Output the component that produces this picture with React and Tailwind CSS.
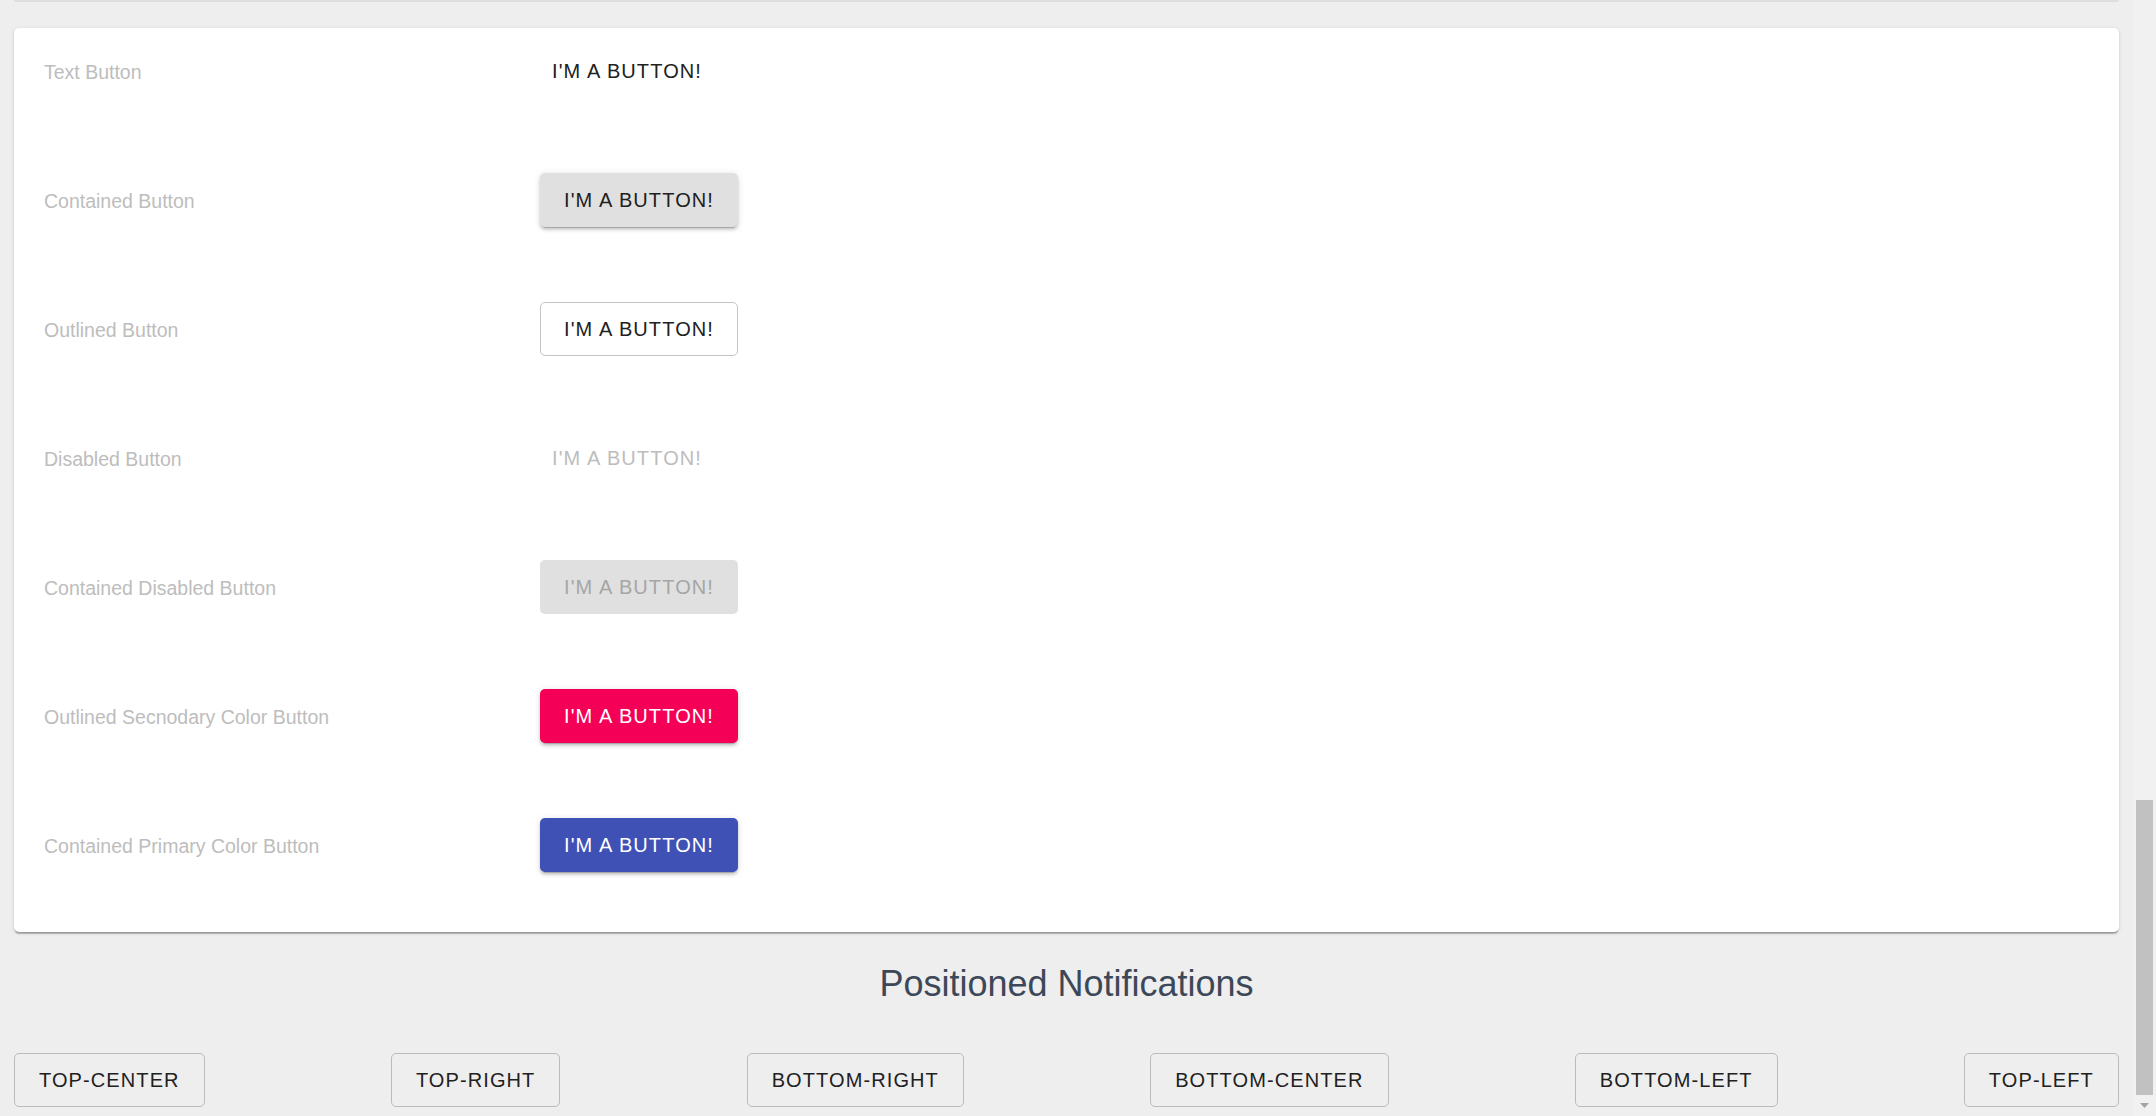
import React from 'react';

// Button demo rows shown inside the card
const rows = [
  { label: 'Text Button', variant: 'text' },
  { label: 'Contained Button', variant: 'contained' },
  { label: 'Outlined Button', variant: 'outlined' },
  { label: 'Disabled Button', variant: 'disabled' },
  { label: 'Contained Disabled Button', variant: 'containedDisabled' },
  { label: 'Outlined Secnodary Color Button', variant: 'secondary' },
  { label: 'Contained Primary Color Button', variant: 'primary' },
];

const positions = ['TOP-CENTER', 'TOP-RIGHT', 'BOTTOM-RIGHT', 'BOTTOM-CENTER', 'BOTTOM-LEFT', 'TOP-LEFT'];

const raised =
  'shadow-[0_4px_1px_-3px_rgba(0,0,0,0.2),0_3px_3px_0_rgba(0,0,0,0.14),0_1px_7px_0_rgba(0,0,0,0.12)]';

const variantClass = {
  text: 'px-[12px] text-[#212121]',
  contained: `w-[198px] justify-center bg-[#e0e0e0] text-[#212121] ${raised}`,
  outlined: 'w-[198px] justify-center bg-white border border-[#c4c4c4] text-[#212121]',
  disabled: 'px-[12px] text-[#bdbdbd] cursor-default',
  containedDisabled: 'w-[198px] justify-center bg-[#e0e0e0] text-[#a6a6a6] cursor-default',
  secondary: `w-[198px] justify-center bg-[#f50057] text-white ${raised}`,
  primary: `w-[198px] justify-center bg-[#3f51b5] text-white ${raised}`,
};

const DemoButton = ({ variant }) => (
  <button
    type="button"
    className={`flex items-center h-[54px] rounded-[5px] text-[20px] tracking-[1.1px] leading-none uppercase ${variantClass[variant]}`}
  >
    I'M A BUTTON!
  </button>
);

const App = () => {
  return (
    <div
      className="flex h-[1116px] w-full overflow-hidden bg-[#eeeeee]"
      style={{ fontFamily: '"Liberation Sans", Arial, sans-serif' }}
    >
      {/* Page content */}
      <div className="flex-1 flex flex-col">
        {/* Bottom edge of the card above */}
        <div className="mx-[14px] h-[2px] rounded-b-[5px] bg-[#dedede]" />

        {/* Buttons card */}
        <div className="mx-[14px] mt-[26px] bg-white rounded-[5px] pt-[16px] pb-[60px] pl-[30px] flex flex-col gap-[75px] shadow-[0_3px_1px_-1px_rgba(0,0,0,0.2),0_1px_1px_0_rgba(0,0,0,0.14),0_1px_4px_0_rgba(0,0,0,0.12)]">
          {rows.map((row) => (
            <div key={row.label} className="flex items-center h-[54px]">
              <span className="w-[496px] mt-[4px] text-[19.5px] text-[#bdbdbd]">{row.label}</span>
              <DemoButton variant={row.variant} />
            </div>
          ))}
        </div>

        {/* Positioned notifications */}
        <h2 className="mt-[30px] text-center text-[36px] leading-[43px] text-[#3c4858]">
          Positioned Notifications
        </h2>
        <div className="mt-[48px] px-[14px] flex justify-between">
          {positions.map((pos) => (
            <button
              key={pos}
              type="button"
              className="h-[54px] px-[24px] rounded-[5px] border border-[#bbbbbb] text-[20px] tracking-[1.1px] leading-none text-[#212121]"
            >
              {pos}
            </button>
          ))}
        </div>
      </div>

      {/* Scrollbar */}
      <div className="w-[23px] bg-[#f1f1f1] flex flex-col justify-end">
        <div className="mx-[3px] h-[295px] bg-[#c1c1c1]" />
        <div className="h-[21px] flex items-center justify-center">
          <svg width="9" height="6" viewBox="0 0 9 6">
            <path d="M0 0 L9 0 L4.5 5 Z" fill="#a3a3a3" />
          </svg>
        </div>
      </div>
    </div>
  );
};

export default App;
